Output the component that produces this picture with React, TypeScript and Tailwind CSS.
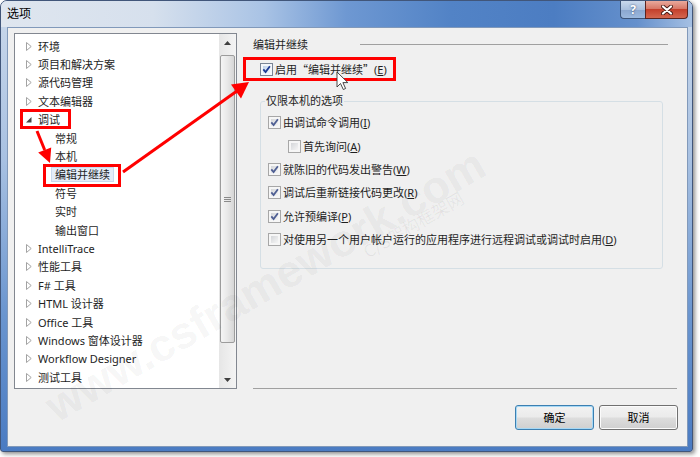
import React from "react";

function Check({ checked, dim }: { checked: boolean; dim?: boolean }) {
  return (
    <span
      className={
        "relative block w-[13px] h-[13px] shrink-0 border " +
        (dim ? "border-[#a7a7a7] bg-[#f6f6f6]" : "border-[#7a8596] bg-[#f4f7fb]")
      }
    >
      <span
        className={
          "absolute inset-[2px] " +
          (dim
            ? "bg-[linear-gradient(135deg,#d4d6d9,#f5f5f5)]"
            : "bg-[linear-gradient(135deg,#bcd0ea,#f3f7fc)]")
        }
      />
      {checked && (
        <svg className="absolute left-[1px] top-[1px]" width="9" height="9" viewBox="0 0 9 9">
          <path
            d="M1.3 4.4 L3.6 7.1 L7.9 1.3"
            fill="none"
            stroke={dim ? "#4f5f93" : "#1d3a93"}
            strokeWidth="1.8"
          />
        </svg>
      )}
    </span>
  );
}

function Hollow() {
  return (
    <svg width="6" height="9" viewBox="0 0 6 9" className="shrink-0">
      <path d="M0.5 0.5 L5.2 4.5 L0.5 8.5 Z" fill="#ffffff" stroke="#a3a3a3" strokeWidth="1" />
    </svg>
  );
}

function Expanded() {
  return (
    <svg width="6" height="9" viewBox="0 0 6 9" className="shrink-0">
      <path d="M5.5 2 L5.5 7.5 L0 7.5 Z" fill="#464646" />
    </svg>
  );
}

function Key({ k }: { k: string }) {
  return (
    <span>
      (<span className="underline underline-offset-[1px]">{k}</span>)
    </span>
  );
}

export default function App() {
  const topItems = ["环境", "项目和解决方案", "源代码管理", "文本编辑器"];
  const children = ["常规", "本机", "编辑并继续", "符号", "实时", "输出窗口"];
  const bottomItems = [
    "IntelliTrace",
    "性能工具",
    "F# 工具",
    "HTML 设计器",
    "Office 工具",
    "Windows 窗体设计器",
    "Workflow Designer",
    "测试工具",
  ];

  const opts: { text: string; k: string; checked: boolean; indent?: boolean }[] = [
    { text: "由调试命令调用", k: "I", checked: true },
    { text: "首先询问", k: "A", checked: false, indent: true },
    { text: "就陈旧的代码发出警告", k: "W", checked: true },
    { text: "调试后重新链接代码更改", k: "R", checked: true },
    { text: "允许预编译", k: "P", checked: true },
    { text: "对使用另一个用户帐户运行的应用程序进行远程调试或调试时启用", k: "D", checked: false },
  ];

  return (
    <div className="relative w-[700px] h-[457px] bg-white overflow-hidden font-[family-name:'Noto_Sans','Noto_Sans_CJK_SC',sans-serif] text-[11px] text-[#1e1e1e]">
      {/* Window */}
      <div className="w-[693px] h-[452px] rounded-t-[7px] rounded-b-[3px] border border-[#41567a] bg-[linear-gradient(180deg,#cbd9eb_0%,#a8c1e2_35%,#6a95cf_70%,#4a7bc2_100%)] shadow-[2px_2px_4px_rgba(0,0,0,0.45)] flex flex-col overflow-hidden">
        {/* Title bar */}
        <div className="h-[26px] shrink-0 flex bg-[linear-gradient(90deg,#dfe6ef_0%,#d6e0ed_22%,#a9c3e5_38%,#6e98d2_50%,#5283c6_65%,#4c7dc2_80%,#6590cc_92%,#a5c0e3_100%)]">
          <div className="self-center pl-[6px] text-[12px] text-black leading-none">选项</div>
          <div className="ml-auto mr-[4px] flex items-start">
            <div className="w-[25px] h-[18px] rounded-bl-[4px] border border-[#3c5479] border-t-0 border-r-0 bg-[linear-gradient(180deg,#c9d8ec_0%,#a9bfdd_50%,#8aa6cf_51%,#9bb8de_100%)] flex items-center justify-center text-white font-bold text-[12px] leading-none [text-shadow:0_0_2px_#28406a]">
              ?
            </div>
            <div className="w-[43px] h-[18px] rounded-br-[4px] border border-[#5a2420] border-t-0 bg-[linear-gradient(180deg,#e9a99c_0%,#d77867_45%,#c4402c_50%,#d4664f_100%)] flex items-center justify-center">
              <svg width="12" height="10" viewBox="0 0 12 10">
                <path d="M2 1.5 L10 8.5 M10 1.5 L2 8.5" stroke="#4a1c16" strokeWidth="4" strokeLinecap="round" />
                <path d="M2 1.5 L10 8.5 M10 1.5 L2 8.5" stroke="#ffffff" strokeWidth="2.2" strokeLinecap="round" />
              </svg>
            </div>
          </div>
        </div>

        {/* Client area */}
        <div className="ml-[6px] mr-[4px] h-[420px] shrink-0 border border-[#8199ba] bg-[#f0f0f0] flex flex-col">
          <div className="flex pl-[6px] pt-[5px]">
            {/* Tree */}
            <div className="w-[223px] h-[356px] border border-[#828790] bg-white flex">
              <div className="flex-1 pt-[3px]">
                {topItems.map((t) => (
                  <div key={t} className="h-[18.4px] flex items-center pl-[11px] leading-none">
                    <Hollow />
                    <span className="ml-[6px]">{t}</span>
                  </div>
                ))}
                <div className="h-[18.4px] flex items-center pl-[11px] leading-none">
                  <Expanded />
                  <span className="ml-[6px]">调试</span>
                </div>
                {children.map((t) => (
                  <div key={t} className="h-[18.4px] flex items-center pl-[36px] leading-none">
                    {t === "编辑并继续" ? (
                      <span className="h-[15px] flex items-center px-[3px] border border-[#c9d9ee] bg-[#e3ecf8]">
                        {t}
                      </span>
                    ) : (
                      <span className="px-[4px]">{t}</span>
                    )}
                  </div>
                ))}
                {bottomItems.map((t) => (
                  <div key={t} className="h-[18.4px] flex items-center pl-[11px] leading-none">
                    <Hollow />
                    <span className="ml-[6px]">{t}</span>
                  </div>
                ))}
              </div>
              {/* Scrollbar */}
              <div className="w-[17px] h-full flex flex-col bg-[linear-gradient(90deg,#e6e6e6,#f4f4f4)]">
                <div className="h-[18px] flex items-center justify-center">
                  <svg width="7" height="4" viewBox="0 0 7 4">
                    <path d="M0 4 L3.5 0 L7 4 Z" fill="#3f3f3f" />
                  </svg>
                </div>
                <div className="mt-[3px] mx-[1px] h-[288px] rounded-[2px] border border-[#9c9c9c] bg-[linear-gradient(90deg,#f5f5f5_0%,#e8e8e8_50%,#d6d6d6_100%)] flex flex-col items-center justify-center gap-[1px]">
                  <span className="block w-[7px] h-[1px] bg-[#8a8a8a]" />
                  <span className="block w-[7px] h-[1px] bg-[#8a8a8a]" />
                  <span className="block w-[7px] h-[1px] bg-[#8a8a8a]" />
                </div>
                <div className="mt-auto h-[17px] flex items-center justify-center">
                  <svg width="7" height="4" viewBox="0 0 7 4">
                    <path d="M0 0 L3.5 4 L7 0 Z" fill="#3f3f3f" />
                  </svg>
                </div>
              </div>
            </div>

            {/* Right column */}
            <div className="ml-[16px] w-[424px] h-[356px] flex flex-col">
              <div className="h-[22px] flex items-center">
                <span className="leading-none">编辑并继续</span>
                <span className="ml-auto mr-[9px] w-[308px] h-[1px] bg-[#a0a0a0]" />
              </div>
              <div className="mt-[4px] h-[20px] pl-[7px] flex items-center gap-[2px]">
                <Check checked />
                <span className="leading-none">
                  启用<span className="font-[family-name:'Noto_Sans_CJK_SC',sans-serif]">“编辑并继续”</span>
                  <Key k="E" />
                </span>
              </div>
              <fieldset className="mt-[15px] ml-[7px] w-[403px] h-[175px] m-0 border border-[#d5dfe5] rounded-[3px] px-[7px] pt-[3px] pb-0 min-w-0">
                <legend className="ml-[-3px] px-[1px] leading-[14px]">仅限本机的选项</legend>
                {opts.map((o) => (
                  <div
                    key={o.k}
                    className={"h-[23.4px] flex items-center gap-[2px] " + (o.indent ? "pl-[20px]" : "")}
                  >
                    <Check checked={o.checked} dim />
                    <span className="leading-none whitespace-nowrap">
                      {o.text}
                      <Key k={o.k} />
                    </span>
                  </div>
                ))}
              </fieldset>
              <div className="mt-auto h-[1px] bg-[#a0a0a0]" />
            </div>
          </div>

          {/* Buttons */}
          <div className="mt-[16px] pr-[9px] flex justify-end gap-[5px]">
            <button className="w-[79px] h-[25px] rounded-[3px] border border-[#3c7fb1] shadow-[inset_0_0_0_1px_#a6d8f5] bg-[linear-gradient(180deg,#f2f2f2_0%,#ebebeb_48%,#dddddd_52%,#cfcfcf_100%)] text-[11px] text-black flex items-center justify-center leading-none">
              确定
            </button>
            <button className="w-[79px] h-[25px] rounded-[3px] border border-[#707070] shadow-[inset_0_0_0_1px_#fbfbfb] bg-[linear-gradient(180deg,#f2f2f2_0%,#ebebeb_48%,#dddddd_52%,#cfcfcf_100%)] text-[11px] text-black flex items-center justify-center leading-none">
              取消
            </button>
          </div>
        </div>
      </div>

      {/* Watermarks */}
      <div className="absolute left-[265px] top-[285px] -translate-x-1/2 -translate-y-1/2 -rotate-[30deg] whitespace-nowrap font-[family-name:'Liberation_Sans',sans-serif] font-bold text-[45px] leading-none text-black/[0.055] pointer-events-none">
        www.csframework.com
      </div>
      <div className="absolute left-[413px] top-[224px] -translate-x-1/2 -translate-y-1/2 -rotate-[30deg] whitespace-nowrap font-[family-name:'Noto_Sans_CJK_SC',sans-serif] text-[17px] leading-none text-black/[0.06] pointer-events-none">
        C/S架构框架网
      </div>

      {/* Annotation boxes */}
      <div className="absolute left-[20px] top-[109px] w-[51px] h-[20px] border-[3px] border-[#ff0000] pointer-events-none" />
      <div className="absolute left-[43px] top-[164px] w-[78px] h-[23px] border-[3px] border-[#ff0000] pointer-events-none" />
      <div className="absolute left-[243px] top-[57px] w-[153px] h-[24px] border-[3px] border-[#ff0000] pointer-events-none" />

      {/* Arrows and cursor */}
      <svg className="absolute left-0 top-0 pointer-events-none" width="700" height="457" viewBox="0 0 700 457">
        <line x1="37" y1="131" x2="44.7" y2="150" stroke="#ff0000" strokeWidth="3" />
        <path d="M50 163 L38.2 152.6 L51.2 147.4 Z" fill="#ff0000" />
        <line x1="123" y1="172" x2="237" y2="91" stroke="#ff0000" strokeWidth="3" />
        <path d="M249 82 L241 98.5 L231 84.5 Z" fill="#ff0000" />
        <path
          d="M337 72 L337 87 L340.5 83.5 L343.3 89.5 L345.6 88.5 L342.9 82.6 L347.8 82.6 Z"
          fill="#ffffff"
          stroke="#333333"
          strokeWidth="0.9"
          strokeLinejoin="round"
        />
      </svg>
    </div>
  );
}
